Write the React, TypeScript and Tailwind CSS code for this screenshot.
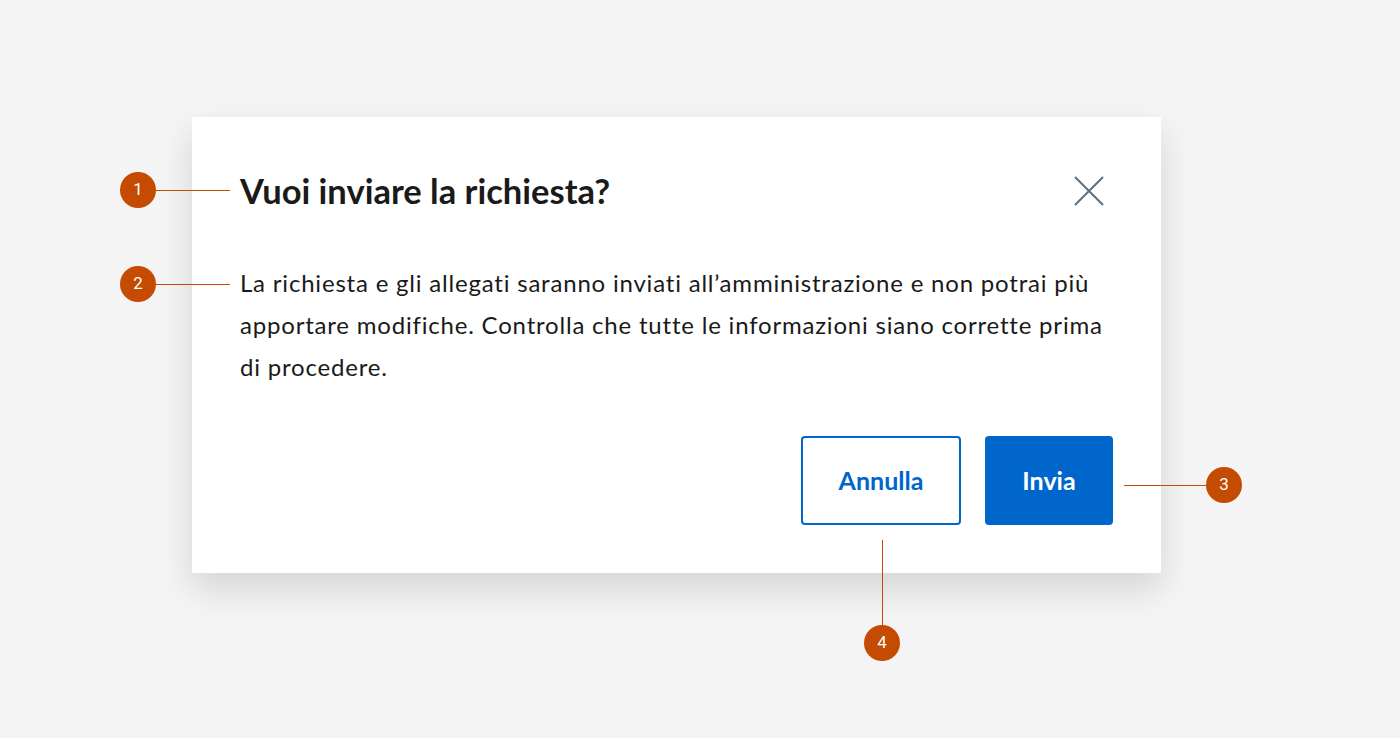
function Badge({ n }: { n: number }) {
  return (
    <div className="w-9 h-9 rounded-full bg-[#c54a02] text-white flex items-center justify-center text-[17px] font-['Roboto',sans-serif]">
      {n}
    </div>
  );
}

export default function App() {
  return (
    <div className="relative w-[1400px] h-[738px] bg-[#f4f4f4] font-['Lato',sans-serif] pt-[117px] pl-[192px]">
      <div className="w-[969px] h-[456px] bg-white shadow-[0_16px_32px_rgba(0,0,0,0.13)] px-12 pt-[52px] flex flex-col">
        <div className="flex items-center justify-between">
          <h2 className="text-[34.5px] font-bold text-[#1a1a1a] leading-[44px]">Vuoi inviare la richiesta?</h2>
          <button className="mr-[9px] text-[#5c6f82]">
            <svg width="30" height="30" viewBox="0 0 30 30" fill="none" stroke="currentColor" strokeWidth="2">
              <path d="M1 1L29 29M29 1L1 29" />
            </svg>
          </button>
        </div>
        <p className="mt-[49px] text-[24px] leading-[42px] tracking-[0.8px] text-[#1a1a1a] max-w-[870px]">
          La richiesta e gli allegati saranno inviati all’amministrazione e non potrai più apportare modifiche. Controlla che tutte le informazioni siano corrette prima di procedere.
        </p>
        <div className="mt-auto mb-12 flex justify-end gap-6">
          <button className="w-40 h-[89px] rounded border-2 border-[#0066cc] text-[#0066cc] text-[25px] font-bold">Annulla</button>
          <button className="w-32 h-[89px] rounded bg-[#0066cc] text-white text-[25px] font-bold">Invia</button>
        </div>
      </div>

      <div className="absolute left-[120px] top-[172px] flex items-center">
        <Badge n={1} />
        <div className="w-[74px] h-px bg-[#c54a02]" />
      </div>
      <div className="absolute left-[120px] top-[266px] flex items-center">
        <Badge n={2} />
        <div className="w-[74px] h-px bg-[#c54a02]" />
      </div>
      <div className="absolute left-[1124px] top-[467px] flex items-center">
        <div className="w-[82px] h-px bg-[#c54a02]" />
        <Badge n={3} />
      </div>
      <div className="absolute left-[864px] top-[540px] flex flex-col items-center">
        <div className="w-px h-[85px] bg-[#c54a02]" />
        <Badge n={4} />
      </div>
    </div>
  );
}
